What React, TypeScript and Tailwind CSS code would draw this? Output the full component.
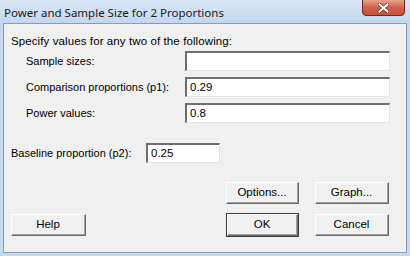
import React from "react";

const font = { fontFamily: '"Liberation Sans", Arial, sans-serif' };

function Field({ value, w }: { value: string; w: string }) {
  return (
    <div
      className={`${w} h-[20px] bg-white border-t-2 border-l-2 border-b border-r border-t-[#6e6e6e] border-l-[#6e6e6e] border-b-[#e3e3e3] border-r-[#e3e3e3] flex items-center pl-[3px] text-[11.5px] text-black`}
    >
      {value}
    </div>
  );
}

function Btn({ label, w, def }: { label: string; w: string; def?: boolean }) {
  return (
    <div
      className={`${w} ${def ? "h-[24px] border border-[#3c3c3c]" : "h-[22px]"} flex`}
    >
      <div className="flex-1 flex border-t border-l border-t-white border-l-white border-b border-r border-b-[#696969] border-r-[#696969]">
        <div className="flex-1 flex items-center justify-center bg-[#f0f0f0] border-b border-r border-b-[#a0a0a0] border-r-[#a0a0a0] text-[11.5px] text-black">
          {label}
        </div>
      </div>
    </div>
  );
}

export default function App() {
  return (
    <div className="w-[410px] h-[256px] flex flex-col bg-[#c4d8ef] overflow-hidden" style={font}>
      <div className="h-[23px] flex items-start relative bg-gradient-to-b from-[#d9e7f6] to-[#c3d7ef]">
        <div className="pl-[4px] pt-[4px] text-[11.5px] text-[#1a1a1a]" style={{ fontFamily: '"Noto Sans", "Liberation Sans", sans-serif' }}>
          Power and Sample Size for 2 Proportions
        </div>
        <div className="absolute left-[362px] top-[-1px] w-[43px] h-[17px] rounded-b-[4px] border border-[#6b2a22] bg-gradient-to-b from-[#eba08e] via-[#d0604a] to-[#c8523a] flex items-center justify-center">
          <svg width="11" height="10" viewBox="0 0 11 10">
            <path d="M1.5 1.5 L9.5 8.5 M9.5 1.5 L1.5 8.5" stroke="#4a2a26" strokeWidth="3.2" strokeLinecap="square" />
            <path d="M1.5 1.5 L9.5 8.5 M9.5 1.5 L1.5 8.5" stroke="#ffffff" strokeWidth="2" strokeLinecap="square" />
          </svg>
        </div>
      </div>
      <div className="mx-[3px] h-[230px] border border-[#8c9bb0] bg-[#f0f0f0] flex flex-col text-[11px] text-black">
        <div className="pl-[7px] pt-[10px] h-[26px] leading-[14px] text-[11.5px] tracking-[0.1px]">Specify values for any two of the following:</div>
        <div className="flex flex-col gap-[6px] pt-[1px]">
          {[
            ["Sample sizes:", ""],
            ["Comparison proportions (p1):", "0.29"],
            ["Power values:", "0.8"],
          ].map(([l, v]) => (
            <div key={l} className="flex items-center h-[20px]">
              <div className="w-[181px] pl-[22px]">{l}</div>
              <Field value={v} w="w-[205px]" />
            </div>
          ))}
        </div>
        <div className="flex items-center h-[20px] mt-[20px]">
          <div className="w-[142px] pl-[7px]">Baseline proportion (p2):</div>
          <Field value="0.25" w="w-[74px]" />
        </div>
        <div className="flex h-[22px] mt-[19px] pl-[222px] gap-[16px]">
          <Btn label="Options..." w="w-[73px]" />
          <Btn label="Graph..." w="w-[74px]" />
        </div>
        <div className="flex h-[24px] mt-[9px] pl-[7px]">
          <div className="pt-[1px]"><Btn label="Help" w="w-[75px]" /></div>
          <div className="ml-[140px]"><Btn label="OK" w="w-[73px]" def /></div>
          <div className="ml-[16px] pt-[1px]"><Btn label="Cancel" w="w-[74px]" /></div>
        </div>
      </div>
    </div>
  );
}
